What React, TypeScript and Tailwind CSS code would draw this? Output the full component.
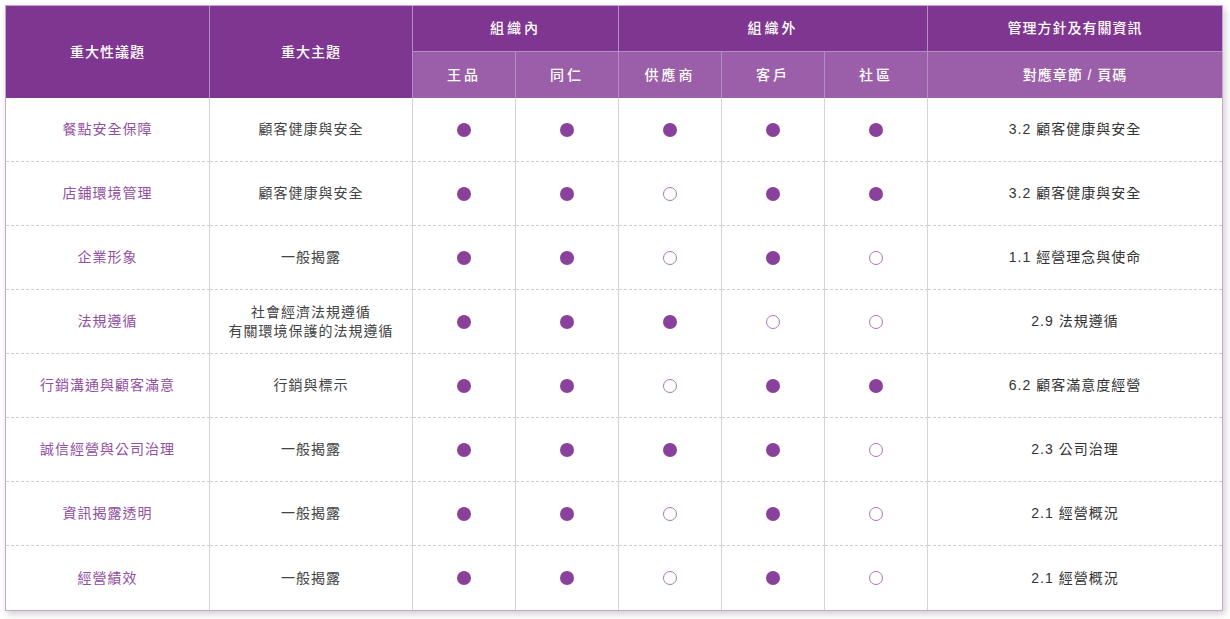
const rows: { issue: string; topic: string[]; marks: boolean[]; ref: string }[] = [
  { issue: '餐點安全保障', topic: ['顧客健康與安全'], marks: [true, true, true, true, true], ref: '3.2 顧客健康與安全' },
  { issue: '店鋪環境管理', topic: ['顧客健康與安全'], marks: [true, true, false, true, true], ref: '3.2 顧客健康與安全' },
  { issue: '企業形象', topic: ['一般揭露'], marks: [true, true, false, true, false], ref: '1.1 經營理念與使命' },
  { issue: '法規遵循', topic: ['社會經濟法規遵循', '有關環境保護的法規遵循'], marks: [true, true, true, false, false], ref: '2.9 法規遵循' },
  { issue: '行銷溝通與顧客滿意', topic: ['行銷與標示'], marks: [true, true, false, true, true], ref: '6.2 顧客滿意度經營' },
  { issue: '誠信經營與公司治理', topic: ['一般揭露'], marks: [true, true, true, true, false], ref: '2.3 公司治理' },
  { issue: '資訊揭露透明', topic: ['一般揭露'], marks: [true, true, false, true, false], ref: '2.1 經營概況' },
  { issue: '經營績效', topic: ['一般揭露'], marks: [true, true, false, true, false], ref: '2.1 經營概況' },
];

const font = { fontFamily: '"Liberation Sans", "Noto Sans CJK TC", sans-serif' };

function Dot({ filled }: { filled: boolean }) {
  return filled ? (
    <span className="block w-[14px] h-[14px] rounded-full bg-[#8a419b]" />
  ) : (
    <span className="block w-[14px] h-[14px] rounded-full border border-[#a67bb3] bg-white" />
  );
}

export default function App() {
  const head = 'flex items-center justify-center text-white text-[14px] tracking-[1px] font-medium';
  const cell =
    'flex items-center justify-center h-[64px] border-r border-r-[#d4d4d4] border-b border-b-[#d0d0d0] [border-bottom-style:dashed]';

  return (
    <div className="w-[1230px] h-[619px] bg-white pt-[5px] pl-[5px]" style={font}>
      <div className="w-[1218px] border border-[#c9a6d2] shadow-[2px_3px_7px_rgba(0,0,0,0.2)] bg-white">
        <div className="grid grid-cols-[204px_203px_103px_103px_103px_103px_103px_1fr]">
          {/* header */}
          <div className={`${head} row-span-2 bg-[#7f3690] border-r border-[#b58ec1]`}>重大性議題</div>
          <div className={`${head} row-span-2 bg-[#7f3690] border-r border-[#b58ec1]`}>重大主題</div>
          <div className={`${head} col-span-2 h-[46px] bg-[#7f3690] border-r border-b border-[#b58ec1] tracking-[3px]`}>組織內</div>
          <div className={`${head} col-span-3 h-[46px] bg-[#7f3690] border-r border-b border-[#b58ec1] tracking-[3px]`}>組織外</div>
          <div className={`${head} h-[46px] bg-[#7f3690] border-b border-[#b58ec1]`}>管理方針及有關資訊</div>
          {['王品', '同仁', '供應商', '客戶', '社區'].map((t) => (
            <div key={t} className={`${head} h-[46px] bg-[#9a5fa8] border-r border-[#b58ec1] tracking-[3px]`}>
              {t}
            </div>
          ))}
          <div className={`${head} h-[46px] bg-[#9a5fa8]`}>對應章節 / 頁碼</div>

          {/* body */}
          {rows.map((r, i) => {
            const last = i === rows.length - 1;
            const c = `${cell} ${last ? 'border-b-0' : ''}`;
            return [
              <div key={`a${i}`} className={`${c} text-[14px] tracking-[1px] text-[#9150a1]`}>{r.issue}</div>,
              <div key={`b${i}`} className={`${c} flex-col text-[14px] tracking-[1px] text-[#444] leading-[19px]`}>
                {r.topic.map((t) => (
                  <span key={t}>{t}</span>
                ))}
              </div>,
              ...r.marks.map((m, j) => (
                <div key={`m${i}-${j}`} className={c}>
                  <Dot filled={m} />
                </div>
              )),
              <div key={`r${i}`} className={`${c} border-r-0 text-[14px] tracking-[1px] text-[#333]`}>{r.ref}</div>,
            ];
          })}
        </div>
      </div>
    </div>
  );
}
